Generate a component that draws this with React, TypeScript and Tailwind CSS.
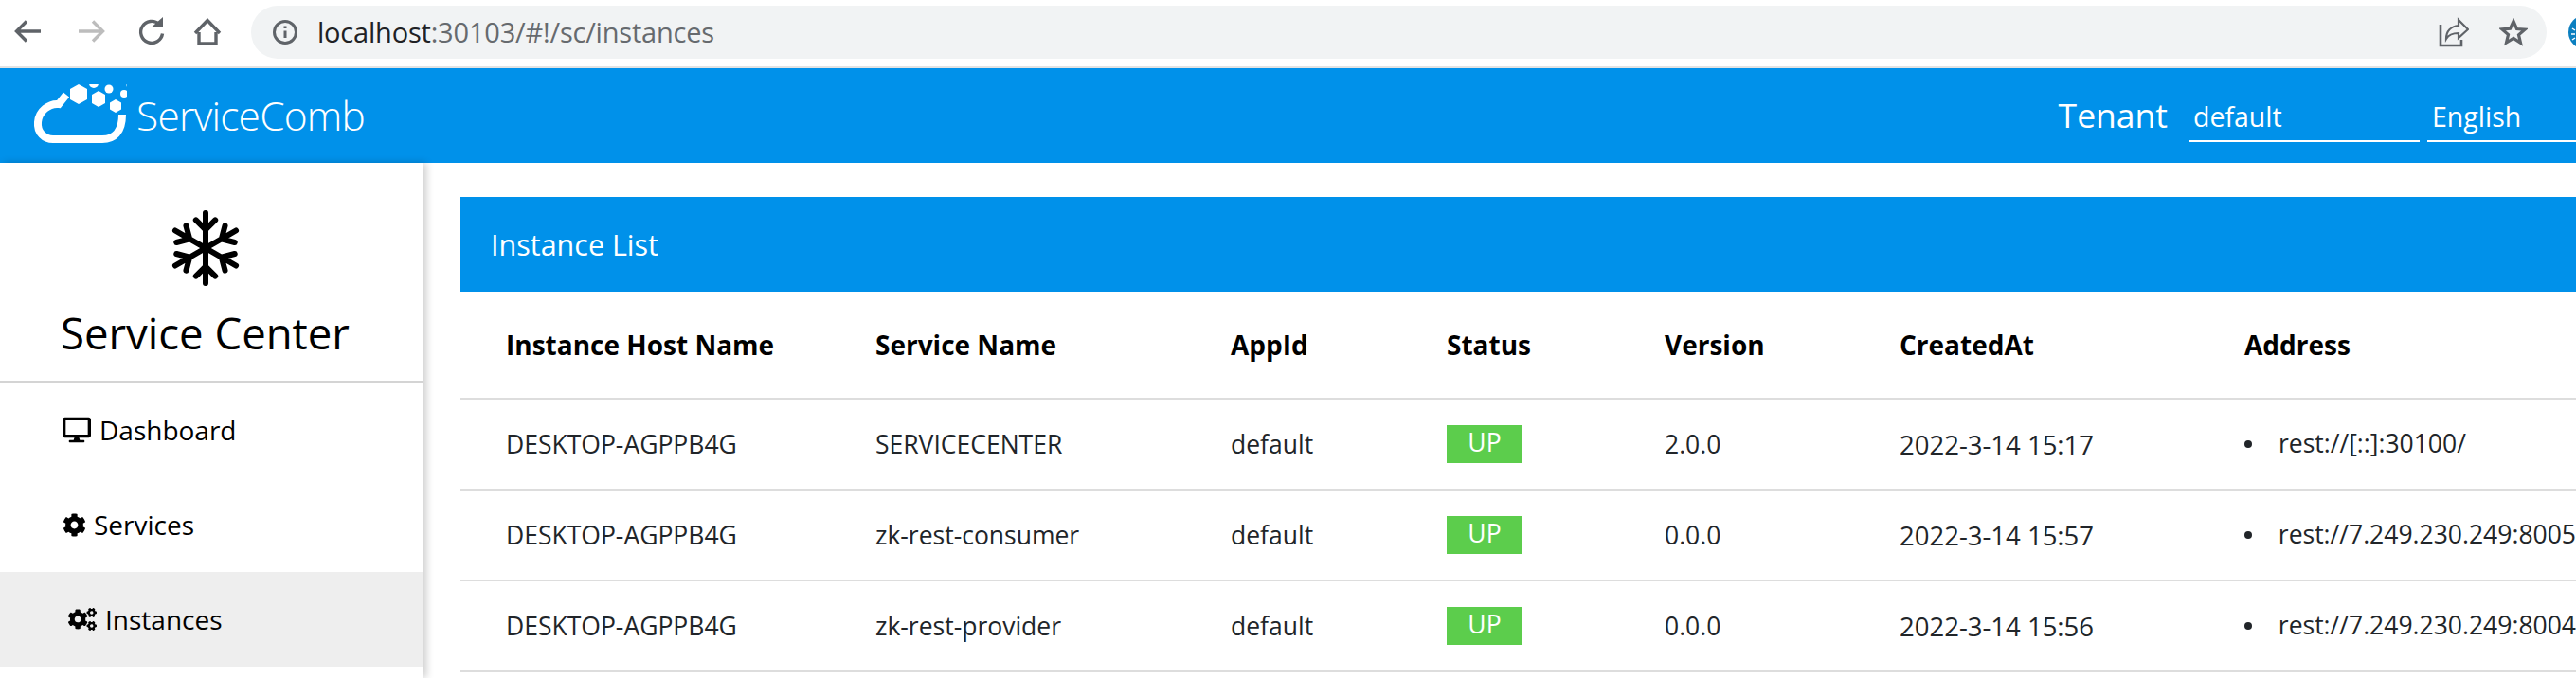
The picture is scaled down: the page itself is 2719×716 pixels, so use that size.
import { FaCog, FaCogs, FaDesktop } from "react-icons/fa";

const rows = [
  { host: "DESKTOP-AGPPB4G", service: "SERVICECENTER", version: "2.0.0", created: "2022-3-14 15:17", address: "rest://[::]:30100/" },
  { host: "DESKTOP-AGPPB4G", service: "zk-rest-consumer", version: "0.0.0", created: "2022-3-14 15:57", address: "rest://7.249.230.249:8005" },
  { host: "DESKTOP-AGPPB4G", service: "zk-rest-provider", version: "0.0.0", created: "2022-3-14 15:56", address: "rest://7.249.230.249:8004" },
];

const ChromeBar = () => (
  <div className="h-[72px] shrink-0 flex items-center border-b-2 border-[#e3e3e3] bg-white pb-[2px]">
    <svg width="250" height="50" viewBox="0 0 250 50" fill="none" className="ml-[10px] shrink-0" strokeWidth="3.4" stroke="#5f6368">
      <path d="M33 24H8M18 13.500 7.500 24 18 34.500" />
      <path d="M73 24H98M88 13.500 98.500 24 88 34.500" stroke="#bdbdbd" />
      <path d="M158 16.500a11.500 11.500 0 1 0 3.500 10" />
      <path d="M150 19.500 162 19.500 162 9z" fill="#5f6368" stroke="none" />
      <path d="M200 25v12h18V25M196 26 209 12.500 222 26" />
    </svg>
    <div className="ml-[5px] h-[56px] flex-1 rounded-full bg-[#f1f3f4] flex items-center">
      <svg width="28" height="28" viewBox="0 0 28 28" fill="none" className="ml-[22px] shrink-0">
        <circle cx="14" cy="14" r="11.500" stroke="#5f6368" strokeWidth="3" />
        <path d="M14 12.500V20M14 7.500v2.500" stroke="#5f6368" strokeWidth="3" />
      </svg>
      <div className="ml-[20px] text-[29px] text-[#666a6e] font-['Open_Sans',sans-serif] tracking-[-0.2px]">
        <span className="text-[#202124]">localhost</span>:30103/#!/sc/instances
      </div>
      <div className="ml-auto mr-[20px] flex items-center gap-[32px]">
        <svg width="32" height="32" viewBox="0 0 32 32" fill="none" stroke="#5f6368" strokeWidth="2.200">
          <path d="M2 8v22h22v-6" strokeWidth="2.600" />
          <path d="M21 3l10 10-10 9v-5c-6 0-10 1-13 6 0-8 5-13 13-14z" />
        </svg>
        <svg width="30" height="30" viewBox="0 0 30 30" fill="none" stroke="#5f6368" strokeWidth="3.200">
          <path d="M15 3.500l3.500 8 8.500.7-6.500 5.600 2 8.500L15 21.500 7.500 26l2-8.500L3 11.900l8.500-.7z" />
        </svg>
      </div>
    </div>
    <div className="ml-[23px] mr-[-28px] h-[36px] w-[36px] shrink-0 rounded-full bg-[#0b7fc0]">
      <svg width="36" height="36" viewBox="0 0 36 36" fill="none" stroke="#fff" strokeWidth="1.500">
        <path d="M4 14l3 2M3 20h4M4 26l3-2M9 8l1 4" />
      </svg>
    </div>
  </div>
);

const Logo = () => (
  <div className="flex items-center">
    <svg width="100" height="66" viewBox="34 92 100 66" fill="none" className="shrink-0">
      <path d="M70 103 62 113C52 112 41 120 40 132 39 143 47 150 56 150H108C120 150 129 143 129 124" stroke="#fff" strokeWidth="8" />
      <path d="M83 92l9 5v11l-9 5-9-5V97z" fill="#fff" />
      <circle cx="99" cy="91" r="5" fill="#fff" />
      <path d="M104 99l7 4v9l-7 4-7-4v-9z" fill="#fff" />
      <circle cx="115" cy="97" r="4.500" fill="#fff" />
      <circle cx="122.500" cy="89" r="3" fill="#fff" />
      <path d="M122 108l6 3.500v7l-6 3.500-6-3.500v-7z" fill="#fff" />
      <circle cx="131" cy="102" r="4" fill="#fff" />
      <circle cx="136" cy="93" r="2.500" fill="#fff" />
    </svg>
    <span className="ml-[10px] text-[42.5px] leading-none font-light text-white font-['Open_Sans',sans-serif] tracking-[-0.8px]">ServiceComb</span>
  </div>
);

const Header = () => (
  <div className="h-[100px] shrink-0 flex items-center bg-[#0091ea] pl-[34px] text-white font-['Open_Sans',sans-serif]">
    <Logo />
    <div className="ml-auto flex items-center">
      <span className="text-[35.5px]">Tenant</span>
      <div className="ml-[22px] h-[56px] w-[244px] border-b-2 border-white pl-[5px] text-[28.5px] leading-[58px]">default</div>
      <div className="ml-[8px] h-[56px] w-[157px] border-b-2 border-white pl-[5px] text-[28.5px] leading-[58px]">English</div>
    </div>
  </div>
);

const Snowflake = () => (
  <svg width="74" height="80" viewBox="-40 -43 80 86" fill="none" stroke="#000" strokeWidth="6.500" strokeLinecap="round">
    {[0, 60, 120, 180, 240, 300].map((deg) => (
      <g key={deg} transform={`rotate(${deg})`}>
        <path d="M0 0V-40M-11 -32 0 -21 11 -32" />
      </g>
    ))}
  </svg>
);

const Sidebar = () => (
  <div className="w-[446px] shrink-0 bg-white shadow-[4px_0_8px_rgba(0,0,0,0.2)] z-10 text-black">
    <div className="h-[232px] border-b-2 border-[#d4d4d4] flex flex-col items-center pr-[13px]">
      <div className="mt-[50px] h-[80px]">
        <Snowflake />
      </div>
      <div className="mt-[19px] text-[45.5px] leading-[60px] font-['Open_Sans',sans-serif] whitespace-nowrap">Service Center</div>
    </div>
    <div className="h-[100px] flex items-center pl-[66px] text-[28px]">
      <FaDesktop className="w-[30px] h-[30px] mr-[9px]" />
      <span>Dashboard</span>
    </div>
    <div className="h-[100px] flex items-center pl-[66px] text-[28px]">
      <FaCog className="w-[25px] h-[25px] mr-[8px]" />
      <span>Services</span>
    </div>
    <div className="h-[100px] flex items-center bg-[#eeeeee] pl-[72px] text-[28px]">
      <FaCogs className="w-[30px] h-[30px] mr-[9px]" />
      <span>Instances</span>
    </div>
  </div>
);

const InstanceTable = () => (
  <table className="w-[2233px] table-fixed border-collapse text-[26.5px] text-[#212529]">
    <colgroup>
      <col className="w-[438px]" />
      <col className="w-[375px]" />
      <col className="w-[228px]" />
      <col className="w-[230px]" />
      <col className="w-[248px]" />
      <col className="w-[364px]" />
      <col />
    </colgroup>
    <thead>
      <tr className="h-[113px] border-b-2 border-[#dddddd] text-left text-[28px] text-black">
        <th className="pl-[48px] font-bold whitespace-nowrap">Instance Host Name</th>
        <th className="font-bold">Service Name</th>
        <th className="font-bold">AppId</th>
        <th className="font-bold">Status</th>
        <th className="font-bold">Version</th>
        <th className="font-bold">CreatedAt</th>
        <th className="font-bold">Address</th>
      </tr>
    </thead>
    <tbody>
      {rows.map((row) => (
        <tr key={row.service} className="h-[96px] border-b-2 border-[#dddddd]">
          <td className="pl-[48px] pt-[2px]">{row.host}</td>
          <td className="pt-[2px]">{row.service}</td>
          <td className="pt-[2px]">default</td>
          <td>
            <span className="block h-[40px] w-[80px] bg-[#5ccd4c] text-center leading-[36px] text-white">UP</span>
          </td>
          <td className="pt-[2px]">{row.version}</td>
          <td className="pt-[2px] text-[27.5px]">{row.created}</td>
          <td className="whitespace-nowrap">
            <div className="flex items-center">
              <span className="h-[8px] w-[8px] rounded-full bg-[#212529]"></span>
              <span className="ml-[28px]">{row.address}</span>
            </div>
          </td>
        </tr>
      ))}
    </tbody>
  </table>
);

const App = () => {
  return (
    <div className="h-[716px] w-[2719px] overflow-hidden flex flex-col bg-white font-['Open_Sans',sans-serif]">
      <ChromeBar />
      <Header />
      <div className="flex flex-1 min-h-0">
        <Sidebar />
        <div className="flex-1 min-w-0 overflow-hidden pl-[40px] pt-[36px]">
          <div className="h-[100px] flex items-center bg-[#0091ea] pl-[32px] pt-[2px] text-[30.5px] text-white">Instance List</div>
          <InstanceTable />
        </div>
      </div>
    </div>
  );
};

export default App;
